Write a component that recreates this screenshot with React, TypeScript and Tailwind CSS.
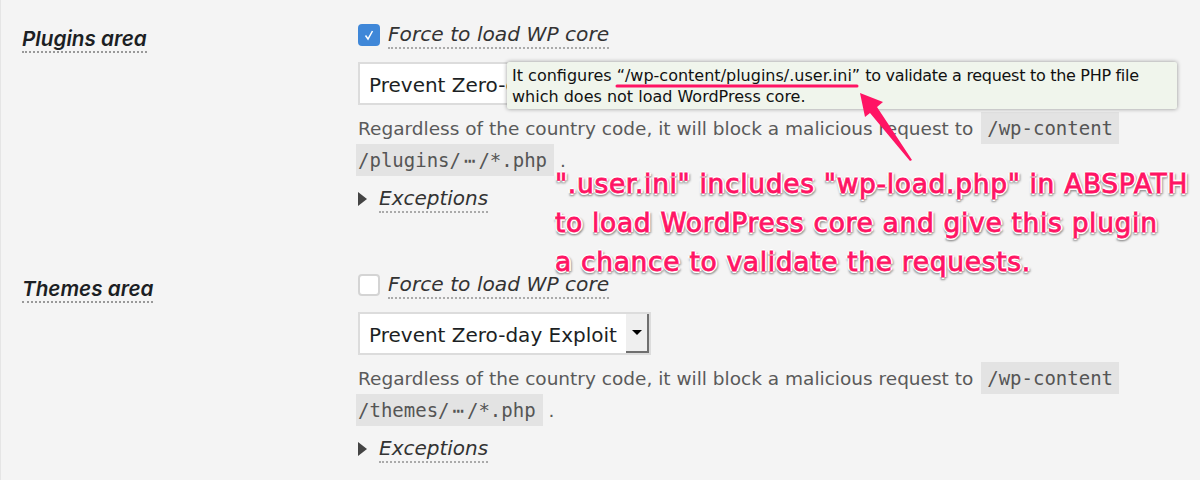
const sans = "font-['DejaVu_Sans',sans-serif]";

function Check({ checked }: { checked: boolean }) {
  if (!checked) {
    return <span className="block h-[22px] w-[22px] shrink-0 rounded-[4px] border-2 border-[#d4d4d4] bg-white"></span>;
  }
  return (
    <span className="flex h-[22px] w-[22px] shrink-0 items-center justify-center rounded-[4px] bg-[#3f87d8]">
      <svg width="14" height="14" viewBox="0 0 14 14" fill="none">
        <path d="M3.5 7.5L6 11L10.5 3" stroke="white" strokeWidth="1.5" />
      </svg>
    </span>
  );
}

function SelectBox() {
  return (
    <div className="flex h-[43px] w-[293px] border-2 border-[#dcdcdc] bg-white">
      <span className="flex-1 pt-[7px] pl-[9px] text-[20px] leading-[28px] text-[#1c1f24]">Prevent Zero-day Exploit</span>
      <span className="flex w-[23px] items-center justify-center border-r-2 border-b-2 border-[#6f6f6f] bg-[#efefef]">
        <span className="h-0 w-0 border-x-[5px] border-t-[5px] border-x-transparent border-t-black"></span>
      </span>
    </div>
  );
}

const code = "bg-[#e3e3e3] py-[5px] font-['DejaVu_Sans_Mono',monospace] text-[19px] leading-[20px] text-[#555]";

function Area({ label, checked, dir }: { label: string; checked: boolean; dir: string }) {
  return (
    <section className="flex h-[250px] pl-[22px]">
      <div className="w-[336px] pt-[26px]">
        <span className="border-b-2 border-dotted border-[#999] font-['Inter',sans-serif] text-[20.7px] leading-[26px] font-semibold text-[#1c1f24] italic">{label}</span>
      </div>
      <div className="w-[820px] pt-[21px]">
        <div className="flex items-center gap-[8px]">
          <Check checked={checked} />
          <span className="border-b-2 border-dotted border-[#aaa] text-[20.2px] leading-[26px] text-[#333] italic">Force to load WP core</span>
        </div>
        <div className="mt-[13px]">
          <SelectBox />
        </div>
        <p className="mt-[8px] text-[18.5px] leading-[32px] whitespace-nowrap text-[#5a5a5a]">
          Regardless of the country code, it will block a malicious request to <code className={`${code} ml-[2px] px-[6px]`}>/wp-content</code>
          <br />
          <code className={`${code} -ml-[2px] pr-[7px] pl-[2px]`}>
            {dir}/<span className="px-[3px]">{"\u22EF"}</span>/*.php
          </code> .
        </p>
        <div className="mt-[8px] flex items-center gap-[12px]">
          <span className="h-0 w-0 border-y-[7px] border-l-[9px] border-y-transparent border-l-[#444]"></span>
          <span className="border-b-2 border-dotted border-[#aaa] text-[20px] leading-[26px] text-[#333] italic">Exceptions</span>
        </div>
      </div>
    </section>
  );
}

export default function App() {
  return (
    <div className={`relative h-[480px] w-[1200px] overflow-hidden bg-[#f4f4f4] shadow-[inset_1px_0_0_#e5e5e5] ${sans}`}>
      <Area label="Plugins area" checked={true} dir="/plugins" />
      <Area label="Themes area" checked={false} dir="/themes" />

      {/* Tooltip */}
      <div className="absolute top-[62px] left-[507px] h-[47px] w-[670px] rounded-[2px] bg-[#f0f5ec] px-[5px] pt-[3px] text-[16px] leading-[21px] whitespace-nowrap text-[#111] shadow-[0_0_4px_rgba(0,0,0,0.4)]">
        It configures “/wp-content/plugins/.user.ini” <span className="tracking-[-0.3px]">to validate a request to the PHP file</span>
        <br />
        which does not load WordPress core.
      </div>

      {/* Annotation */}
      <svg className="absolute top-0 left-0" width="1200" height="480" viewBox="0 0 1200 480" fill="none">
        <path d="M617 86H857" stroke="#ff1464" strokeWidth="3" strokeLinecap="round" />
        <path d="M860 93L883 102L877 107L912 160L910 161L870 113L865 117Z" fill="#ff1464" />
      </svg>
      <div className="absolute top-[164px] left-[555px] text-[26.5px] leading-[39px] tracking-[0.67px] whitespace-nowrap text-[#ff1464] [-webkit-text-stroke:0.8px_#ff1464] [text-shadow:2px_0_0_#fff,-2px_0_0_#fff,0_2px_0_#fff,0_-2px_0_#fff,1px_3px_2px_#999,-1px_3px_2px_#999,3px_1px_2px_#999]">
        ".user.ini" includes "wp-load.php" in ABSPATH
        <br />
        to load WordPress core and give this plugin
        <br />
        a chance to validate the requests.
      </div>
    </div>
  );
}
